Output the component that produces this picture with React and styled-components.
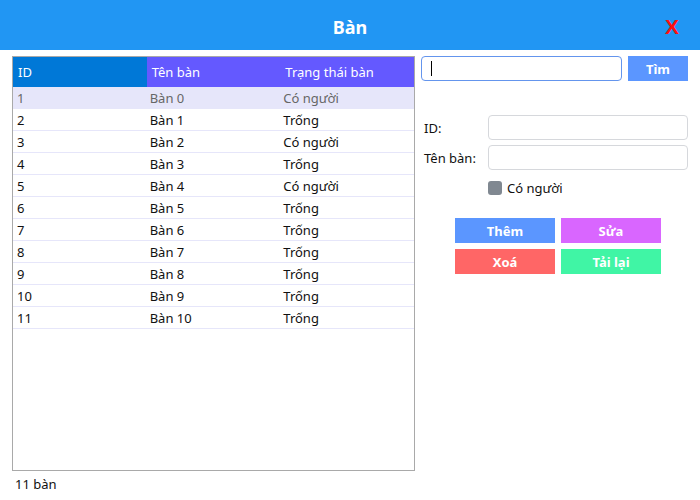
import styled, { createGlobalStyle } from "styled-components";

const Global = createGlobalStyle`
  body {
    margin: 0;
    background: #fff;
    font-family: "Noto Sans", "Open Sans", sans-serif;
    font-size: 13px;
    color: #111;
  }
`;

const Window = styled.div`
  width: 700px;
  height: 500px;
  display: flex;
  flex-direction: column;
`;

const TitleBar = styled.div`
  height: 50px;
  background: #2196f3;
  display: grid;
  grid-template-columns: 1fr auto 1fr;
  align-items: center;
`;

const Title = styled.div`
  grid-column: 2;
  color: #fff;
  font-weight: 700;
  font-size: 18px;
  padding-top: 3px;
`;

const Close = styled.div`
  justify-self: end;
  margin-right: 21px;
  color: #ff1010;
  font-family: "Liberation Sans", sans-serif;
  font-weight: 700;
  font-size: 21px;
  padding-top: 4px;
`;

const Body = styled.div`
  display: flex;
  gap: 6px;
  padding: 6px 0 0 12px;
`;

const LeftCol = styled.div`
  display: flex;
  flex-direction: column;
  width: 403px;
`;

const TableBox = styled.div`
  height: 413px;
  border: 1px solid #a9a9a9;
  background: #fff;
`;

const Grid = styled.table`
  width: 100%;
  border-collapse: collapse;
  table-layout: fixed;
`;

const Th = styled.th`
  height: 30px;
  padding: 0 0 0 5px;
  text-align: left;
  font-weight: 400;
  color: #fff;
  background: ${(p) => (p.$first ? "#0078d7" : "#6459ff")};
`;

const Tr = styled.tr`
  background: ${(p) => (p.$selected ? "#e6e6fa" : "#fff")};
  color: ${(p) => (p.$selected ? "#666" : "#111")};
  border-bottom: 1px solid #e6e6fa;
`;

const Td = styled.td`
  height: 21px;
  padding: 0 0 0 ${(p) => (p.$first ? 4 : 3)}px;
`;

const Count = styled.div`
  padding: 4px 0 0 3px;
`;

const RightCol = styled.div`
  width: 267px;
  display: flex;
  flex-direction: column;
`;

const SearchRow = styled.div`
  display: flex;
  gap: 6px;
  height: 25px;
`;

const SearchInput = styled.div`
  width: 201px;
  border: 1px solid #6495ed;
  border-radius: 4px;
  display: flex;
  align-items: center;
  padding-left: 9px;
  box-sizing: border-box;
  &::before {
    content: "";
    width: 1px;
    height: 15px;
    background: #000;
  }
`;

const Button = styled.div`
  display: flex;
  align-items: center;
  justify-content: center;
  width: ${(p) => p.$w || 100}px;
  height: 25px;
  background: ${(p) => p.$bg};
  color: #fff;
  font-weight: 700;
  font-size: 13px;
`;

const Form = styled.div`
  margin-top: 34px;
  display: grid;
  grid-template-columns: 67px 200px;
  row-gap: 5px;
  align-items: center;
`;

const Label = styled.div`
  padding-left: 3px;
`;

const Field = styled.div`
  height: 25px;
  border: 1px solid #d6d8dc;
  border-radius: 4px;
  box-sizing: border-box;
`;

const Check = styled.label`
  grid-column: 2;
  display: flex;
  align-items: center;
  gap: 5px;
  margin-top: 4px;
  &::before {
    content: "";
    width: 14px;
    height: 14px;
    border-radius: 3px;
    background: #808891;
  }
`;

const Actions = styled.div`
  margin: 21px 0 0 34px;
  display: grid;
  grid-template-columns: 100px 100px;
  gap: 6px;
`;

const rows = Array.from({ length: 11 }, (_, i) => ({
  id: i + 1,
  name: `Bàn ${i}`,
  status: i <= 4 && i % 2 === 0 ? "Có người" : "Trống",
}));

export default function App() {
  return (
    <Window>
      <Global />
      <TitleBar>
        <Title>Bàn</Title>
        <Close>X</Close>
      </TitleBar>
      <Body>
        <LeftCol>
          <TableBox>
            <Grid>
              <thead>
                <tr>
                  <Th $first>ID</Th>
                  <Th>Tên bàn</Th>
                  <Th>Trạng thái bàn</Th>
                </tr>
              </thead>
              <tbody>
                {rows.map((r, i) => (
                  <Tr key={r.id} $selected={i === 0}>
                    <Td $first>{r.id}</Td>
                    <Td>{r.name}</Td>
                    <Td>{r.status}</Td>
                  </Tr>
                ))}
              </tbody>
            </Grid>
          </TableBox>
          <Count>11 bàn</Count>
        </LeftCol>
        <RightCol>
          <SearchRow>
            <SearchInput />
            <Button $w={60} $bg="#5b96ff">Tìm</Button>
          </SearchRow>
          <Form>
            <Label>ID:</Label>
            <Field />
            <Label>Tên bàn:</Label>
            <Field />
            <Check>Có người</Check>
          </Form>
          <Actions>
            <Button $bg="#5b96ff">Thêm</Button>
            <Button $bg="#d966ff">Sửa</Button>
            <Button $bg="#ff6666">Xoá</Button>
            <Button $bg="#40f5a5">Tải lại</Button>
          </Actions>
        </RightCol>
      </Body>
    </Window>
  );
}
